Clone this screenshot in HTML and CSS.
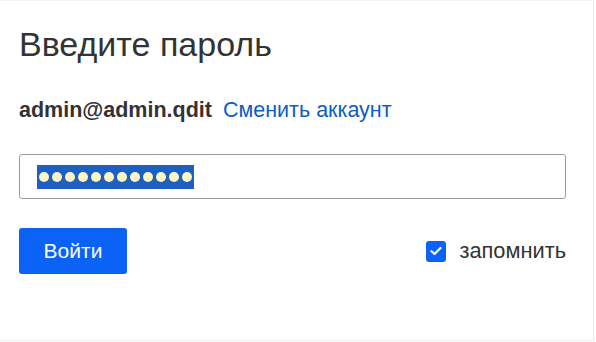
FILE: index.html
```html
<!DOCTYPE html>
<html lang="ru">

<head>
    <meta charset="UTF-8">
    <meta name="viewport" content="width=device-width, initial-scale=1.0">
    <title>Вход</title>
    <link rel="stylesheet" href="styles.css">
</head>

<body>
    <div class="login-card">
        <h1 class="login-title">Введите пароль</h1>

        <div class="account-row">
            <span class="account-name">admin@admin.qdit</span>
            <a href="#" class="account-switch">Сменить аккаунт</a>
        </div>

        <div class="password-field">
            <!-- selected password, drawn as dots -->
            <span class="password-selected">
                <i></i><i></i><i></i><i></i><i></i><i></i><i></i><i></i><i></i><i></i><i></i><i></i>
            </span>
        </div>

        <div class="form-actions">
            <button class="btn-login">Войти</button>
            <label class="remember">
                <span class="remember-box">
                    <svg width="12" height="10" viewBox="0 0 12 10">
                        <path d="M1.5 5.2 L4.5 8 L10.5 2" fill="none" stroke="#fff" stroke-width="2.2" stroke-linecap="round" stroke-linejoin="round"/>
                    </svg>
                </span>
                <span class="remember-label">запомнить</span>
            </label>
        </div>
    </div>
</body>

</html>
```

FILE: styles.css
```css
* {
    margin: 0;
    padding: 0;
    box-sizing: border-box;
    font-family: 'Liberation Sans', Arial, sans-serif;
}

body {
    background: #fff;
    width: 596px;
    height: 342px;
    overflow: hidden;
}

.login-card {
    width: 594px;
    height: 341px;
    border-right: 1px solid #ececec;
    border-bottom: 1px solid #f0f0f0;
    border-top: 1px solid #f4f4f4;
    padding: 23px 27px 0 19px;
}

.login-title {
    font-size: 34px;
    font-weight: normal;
    color: #333;
    line-height: 40px;
}

.account-row {
    margin-top: 33px;
    display: flex;
    align-items: baseline;
    gap: 11px;
    font-size: 21.5px;
    line-height: 26px;
}

.account-name {
    font-weight: bold;
    color: #333;
}

.account-switch {
    color: #0b5cc8;
    text-decoration: none;
}

.password-field {
    margin-top: 31px;
    height: 45px;
    border: 1px solid #9a9a9a;
    border-radius: 3px;
    padding: 9px 17px;
    display: flex;
    align-items: center;
}

.password-selected {
    background: #1e5fc4;
    height: 24px;
    padding: 0 2px;
    display: flex;
    align-items: center;
    gap: 3px;
}

.password-selected i {
    width: 10px;
    height: 10px;
    border-radius: 50%;
    background: #fdf5c4;
}

.form-actions {
    margin-top: 29px;
    display: flex;
    justify-content: space-between;
    align-items: center;
}

.btn-login {
    width: 108px;
    height: 46px;
    background: #0a62f6;
    color: #fff;
    border: none;
    border-radius: 3px;
    font-size: 21px;
    cursor: pointer;
}

.remember {
    display: flex;
    align-items: center;
    gap: 13px;
    cursor: pointer;
}

.remember-box {
    width: 20px;
    height: 21px;
    background: #0a62f6;
    border-radius: 3px;
    display: flex;
    align-items: center;
    justify-content: center;
}

.remember-label {
    font-size: 21.8px;
    color: #333;
}
```
